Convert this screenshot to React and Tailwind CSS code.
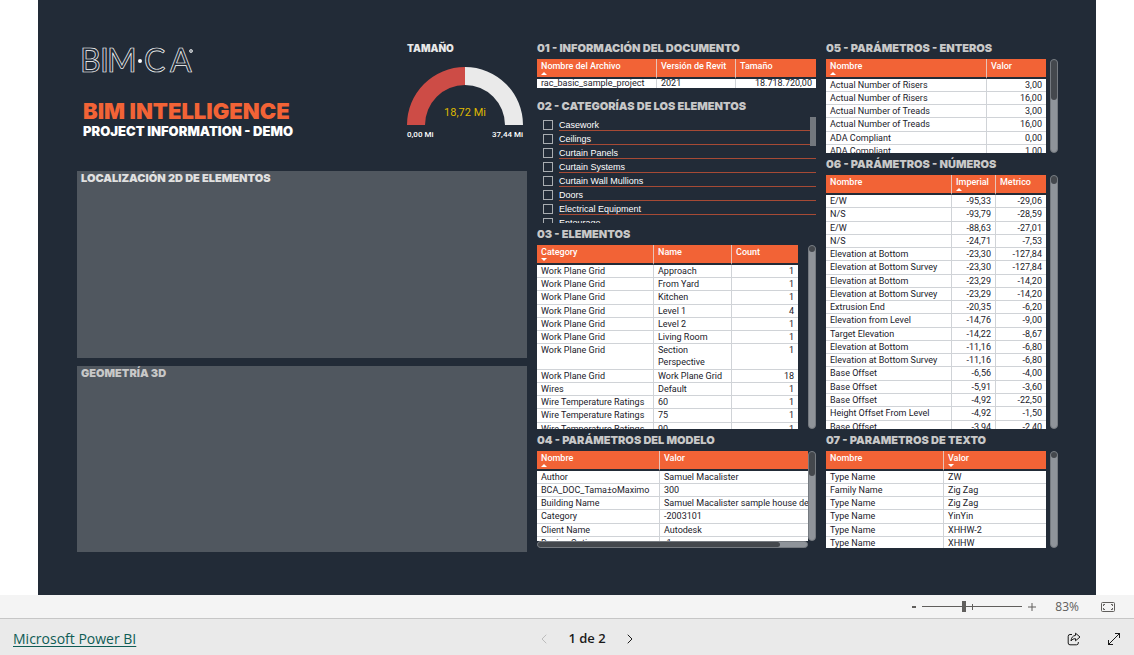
import { useState } from 'react'
import { clsx } from 'clsx'
import { ChevronLeft, ChevronRight } from 'lucide-react'

const CATEGORIES = ['Casework', 'Ceilings', 'Curtain Panels', 'Curtain Systems', 'Curtain Wall Mullions', 'Doors', 'Electrical Equipment', 'Entourage']

const DOCUMENT = {
  cols: [
    { label: 'Nombre del Archivo', width: 'w-[120px]', sort: 'asc' },
    { label: 'Versión de Revit', width: 'w-[79px]' },
    { label: 'Tamaño', num: true },
  ],
  rows: [['rac_basic_sample_project', '2021', '18.718.720,00']],
}

const ELEMENTS = {
  cols: [
    { label: 'Category', width: 'w-[117px]', sort: 'desc' },
    { label: 'Name', width: 'w-[78px]' },
    { label: 'Count', num: true },
  ],
  rows: [
    ['Work Plane Grid', 'Approach', '1'],
    ['Work Plane Grid', 'From Yard', '1'],
    ['Work Plane Grid', 'Kitchen', '1'],
    ['Work Plane Grid', 'Level 1', '4'],
    ['Work Plane Grid', 'Level 2', '1'],
    ['Work Plane Grid', 'Living Room', '1'],
    ['Work Plane Grid', 'Section Perspective', '1'],
    ['Work Plane Grid', 'Work Plane Grid', '18'],
    ['Wires', 'Default', '1'],
    ['Wire Temperature Ratings', '60', '1'],
    ['Wire Temperature Ratings', '75', '1'],
    ['Wire Temperature Ratings', '90', '1'],
  ],
}

const MODEL = {
  cols: [
    { label: 'Nombre', width: 'w-[123px]', sort: 'asc' },
    { label: 'Valor' },
  ],
  rows: [
    ['Author', 'Samuel Macalister'],
    ['BCA_DOC_Tama±oMaximo', '300'],
    ['Building Name', 'Samuel Macalister sample house design'],
    ['Category', '-2003101'],
    ['Client Name', 'Autodesk'],
    ['Design Option', '-1'],
  ],
}

const INTEGERS = {
  cols: [
    { label: 'Nombre', width: 'w-[161px]', sort: 'asc' },
    { label: 'Valor', num: true },
  ],
  rows: [
    ['Actual Number of Risers', '3,00'],
    ['Actual Number of Risers', '16,00'],
    ['Actual Number of Treads', '3,00'],
    ['Actual Number of Treads', '16,00'],
    ['ADA Compliant', '0,00'],
    ['ADA Compliant', '1,00'],
  ],
}

const NUMBERS = {
  cols: [
    { label: 'Nombre', width: 'w-[126px]' },
    { label: 'Imperial', width: 'w-[44px]', num: true, sort: 'asc' },
    { label: 'Metrico', num: true },
  ],
  rows: [
    ['E/W', '-95,33', '-29,06'],
    ['N/S', '-93,79', '-28,59'],
    ['E/W', '-88,63', '-27,01'],
    ['N/S', '-24,71', '-7,53'],
    ['Elevation at Bottom', '-23,30', '-127,84'],
    ['Elevation at Bottom Survey', '-23,30', '-127,84'],
    ['Elevation at Bottom', '-23,29', '-14,20'],
    ['Elevation at Bottom Survey', '-23,29', '-14,20'],
    ['Extrusion End', '-20,35', '-6,20'],
    ['Elevation from Level', '-14,76', '-9,00'],
    ['Target Elevation', '-14,22', '-8,67'],
    ['Elevation at Bottom', '-11,16', '-6,80'],
    ['Elevation at Bottom Survey', '-11,16', '-6,80'],
    ['Base Offset', '-6,56', '-4,00'],
    ['Base Offset', '-5,91', '-3,60'],
    ['Base Offset', '-4,92', '-22,50'],
    ['Height Offset From Level', '-4,92', '-1,50'],
    ['Base Offset', '-3,94', '-2,40'],
  ],
}

const TEXTS = {
  cols: [
    { label: 'Nombre', width: 'w-[118px]' },
    { label: 'Valor', sort: 'desc' },
  ],
  rows: [
    ['Type Name', 'ZW'],
    ['Family Name', 'Zig Zag'],
    ['Type Name', 'Zig Zag'],
    ['Type Name', 'YinYin'],
    ['Type Name', 'XHHW-2'],
    ['Type Name', 'XHHW'],
  ],
}

function Heading({ children }) {
  return <h2 className="h-[22px] leading-[22px] text-[11px] font-black font-['Inter',sans-serif] text-[#c8c8c8] whitespace-nowrap">{children}</h2>
}

function SortArrow({ dir }) {
  return (
    <svg viewBox="0 0 6 3" className="absolute left-1 bottom-0.5 w-1.5 h-[3px] fill-white">
      <path d={dir === 'asc' ? 'M0 3L3 0L6 3Z' : 'M0 0L3 3L6 0Z'} />
    </svg>
  )
}

function DataTable({ data, label, height, nowrap, dense }) {
  return (
    <table aria-label={label} className={clsx("w-full table-fixed border-separate border-spacing-0 bg-white text-[9px] font-['Roboto',sans-serif]", height)}>
      <thead>
        <tr className="bg-[#f26336]">
          {data.cols.map((c, i) => (
            <th key={c.label} className={clsx('relative h-5 px-1 pt-px text-left align-top leading-3 font-medium text-white whitespace-nowrap border-b-2 border-[#222b37]', c.width, i < data.cols.length - 1 && 'border-r border-r-[#e8c3b8]')}>
              {c.label}
              {c.sort && <SortArrow dir={c.sort} />}
            </th>
          ))}
        </tr>
      </thead>
      <tbody>
        {data.rows.map((row, r) => (
          <tr key={r}>
            {row.map((cell, i) => (
              <td key={i} className={clsx('px-1 align-top text-[#1a1a2a] border-b border-[#d0d3d7]', dense ? 'leading-[9px]' : 'leading-3', data.cols[i].num && 'text-right', i < row.length - 1 && 'border-r', nowrap && 'whitespace-nowrap')}>{cell}</td>
            ))}
          </tr>
        ))}
      </tbody>
    </table>
  )
}

function Scrollbar({ thumb }) {
  return (
    <div className="w-2 shrink-0 rounded-full bg-[#8f949a] border border-[#757a80]">
      <div className={clsx('rounded-full bg-[#44484d]', thumb)} />
    </div>
  )
}

function Slicer() {
  const [checked, setChecked] = useState([])

  function toggle(c) {
    setChecked(prev => prev.includes(c) ? prev.filter(x => x !== c) : [...prev, c])
  }

  return (
    <div className="relative h-[106px] overflow-hidden pl-1.5">
      {CATEGORIES.map(c => (
        <label key={c} className="flex items-end gap-1.5 h-3.5">
          <input type="checkbox" checked={checked.includes(c)} onChange={() => toggle(c)} className="appearance-none mb-px w-[10px] h-[10px] border border-[#a9adb1] checked:bg-[#f26336]" />
          <span className="flex-1 border-b border-[#a64a35] text-[9px] leading-[10px] text-white font-['Liberation_Sans',Arial,sans-serif]">{c}</span>
        </label>
      ))}
      <div className="absolute right-0 top-0 w-1.5 h-[29px] bg-[#73787e]" />
    </div>
  )
}

function Logo() {
  return (
    <svg viewBox="0 0 112 28" className="block w-28 h-7 overflow-visible" role="img" aria-label="BIM·CA">
      <g fill="none" stroke="#ffffff" strokeWidth="0.7" fontFamily="Lato, sans-serif" fontSize="32" fontWeight="400">
        <text x="-3 17 24" y="25">BIM</text>
        <text x="61 87" y="25">CA</text>
      </g>
      <circle cx="57" cy="14" r="2" fill="#ffffff" />
      <circle cx="108" cy="4" r="1.500" fill="#8a9098" stroke="#ffffff" strokeWidth="0.7" />
    </svg>
  )
}

function Gauge() {
  return (
    <div className="w-[116px]">
      <h2 className="h-[22px] leading-[22px] text-[10px] font-black font-['Inter',sans-serif] text-[#e8e8e8]">TAMAÑO</h2>
      <div className="relative mt-2">
        <svg viewBox="0 0 116 58" className="block w-full">
          <path d="M0 58A58 58 0 0 1 58 0V18A40 40 0 0 0 18 58Z" fill="#cd4c46" />
          <path d="M58 0A58 58 0 0 1 116 58H98A40 40 0 0 0 58 18Z" fill="#eaeaea" />
        </svg>
        <span className="absolute inset-x-0 bottom-1 text-center text-[11px] leading-4 text-[#dfb900] font-['Roboto',sans-serif]">18,72 Mi</span>
      </div>
      <div className="flex justify-between mt-1 text-[8px] leading-3 font-medium text-white font-['Roboto',sans-serif]">
        <span>0,00 Mi</span>
        <span>37,44 Mi</span>
      </div>
    </div>
  )
}

function Report() {
  return (
    <main className="mx-auto grid w-full max-w-[1058px] flex-1 grid-cols-[450fr_279fr_232fr] gap-x-2.5 bg-[#222b37] pl-[39px] pr-[38px] pt-[37px] pb-[43px]">
      {/* Left: title, gauge and viewers */}
      <section className="flex flex-col gap-2">
        <div className="flex h-[126px] justify-between pl-1.5 pr-1">
          <div className="pt-2.5 font-black font-['Inter',sans-serif] whitespace-nowrap">
            <Logo />
            <h1 className="mt-6 text-[22px] leading-6 text-[#f26336]">BIM INTELLIGENCE</h1>
            <p className="text-[13px] leading-4 text-white">PROJECT INFORMATION - DEMO</p>
          </div>
          <Gauge />
        </div>
        <div className="flex-1 bg-[#50575f] px-1">
          <h2 className="leading-[15px] text-[11px] font-black font-['Inter',sans-serif] text-[#e0e0e0]">LOCALIZACIÓN 2D DE ELEMENTOS</h2>
        </div>
        <div className="flex-1 bg-[#50575f] px-1">
          <h2 className="leading-[15px] text-[11px] font-black font-['Inter',sans-serif] text-[#c8c8c8]">GEOMETRÍA 3D</h2>
        </div>
      </section>

      {/* Middle */}
      <section className="min-w-0">
        <Heading>01 - INFORMACIÓN DEL DOCUMENTO</Heading>
        <div className="h-[29px] mb-[7px] overflow-hidden">
          <DataTable data={DOCUMENT} label="Información del documento" dense />
        </div>
        <Heading>02 - CATEGORÍAS DE LOS ELEMENTOS</Heading>
        <Slicer />
        <Heading>03 - ELEMENTOS</Heading>
        <div className="flex h-[184px] gap-2.5">
          <div className="flex-1 overflow-hidden">
            <DataTable data={ELEMENTS} label="Elementos" height="h-[191px]" />
          </div>
          <Scrollbar thumb="h-1.5" />
        </div>
        <Heading>04 - PARÁMETROS DEL MODELO</Heading>
        <div className="flex">
          <div className="flex-1 min-w-0">
            <div className="h-[90px] overflow-hidden">
              <DataTable data={MODEL} label="Parámetros del modelo" height="h-[99px]" nowrap />
            </div>
            <div className="h-[7px] rounded-full border border-[#757a80] bg-[#8f949a]">
              <div className="h-full w-[90%] rounded-full bg-[#44484d]" />
            </div>
          </div>
          <div className="flex h-[90px]">
            <Scrollbar thumb="h-6" />
          </div>
        </div>
      </section>

      {/* Right */}
      <section className="min-w-0">
        <Heading>05 - PARÁMETROS - ENTEROS</Heading>
        <div className="flex h-[94px] gap-1">
          <div className="flex-1 overflow-hidden">
            <DataTable data={INTEGERS} label="Parámetros enteros" height="h-[99px]" />
          </div>
          <Scrollbar thumb="h-10" />
        </div>
        <Heading>06 - PARÁMETROS - NÚMEROS</Heading>
        <div className="flex h-[254px] gap-1">
          <div className="flex-1 overflow-hidden">
            <DataTable data={NUMBERS} label="Parámetros números" height="h-[259px]" />
          </div>
          <Scrollbar thumb="h-2" />
        </div>
        <Heading>07 - PARAMETROS DE TEXTO</Heading>
        <div className="flex h-[97px] gap-1">
          <div className="flex-1 overflow-hidden">
            <DataTable data={TEXTS} label="Parámetros de texto" height="h-[99px]" />
          </div>
          <Scrollbar thumb="h-1.5" />
        </div>
      </section>
    </main>
  )
}

function ZoomBar() {
  const [zoom, setZoom] = useState(83)

  return (
    <div className="flex h-6 items-center justify-end border-b border-[#c6c6c6] bg-[#f4f4f4] pr-[19px] text-[#605e5c]">
      <button aria-label="Alejar" onClick={() => setZoom(zoom - 1)} className="flex h-4 w-4 items-center justify-center"><span className="h-0.5 w-1 bg-current" /></button>
      <div className="relative flex items-center">
        <span className="absolute left-1/2 h-1.5 w-px bg-[#605e5c]" />
        <input
          type="range" min="0" max="200" value={zoom} aria-label="Zoom"
          onChange={e => setZoom(Number(e.target.value))}
          className="h-3 w-[100px] appearance-none bg-transparent [&::-webkit-slider-runnable-track]:h-px [&::-webkit-slider-runnable-track]:bg-[#605e5c] [&::-webkit-slider-thumb]:-mt-[5px] [&::-webkit-slider-thumb]:h-[11px] [&::-webkit-slider-thumb]:w-1 [&::-webkit-slider-thumb]:appearance-none [&::-webkit-slider-thumb]:bg-[#605e5c]"
        />
      </div>
      <button aria-label="Acercar" onClick={() => setZoom(zoom + 1)} className="ml-1.5 flex h-4 w-2 items-center justify-center">
        <svg viewBox="0 0 8 8" className="h-2 w-2 shrink-0" stroke="currentColor"><path d="M4 0V8M0 4H8" /></svg>
      </button>
      <span className="w-[43px] text-right text-xs">{zoom}%</span>
      <button aria-label="Ajustar a la página" className="ml-[22px]">
        <svg viewBox="0 0 14 10" className="block h-2.5 w-3.5" fill="none" stroke="currentColor">
          <rect x="0.5" y="0.5" width="13" height="9" rx="1" />
          <path d="M2.5 4V2.5H4M10 2.5H11.5V4M11.5 6V7.5H10M4 7.5H2.5V6" />
        </svg>
      </button>
    </div>
  )
}

function Footer() {
  const [page, setPage] = useState(1)

  return (
    <footer className="grid h-9 grid-cols-3 items-center bg-[#eaeaea] px-[13px] pt-[3px] text-[#1a1a1a]">
      <a href="#powerbi" className="text-sm leading-5 text-[#0f5c55] underline underline-offset-2">Microsoft Power BI</a>
      <div className="flex items-center justify-center gap-4 pl-10 text-[13px] font-semibold">
        <button aria-label="Página anterior" disabled={page === 1} onClick={() => setPage(1)} className="disabled:text-[#bdbdbd]"><ChevronLeft className="h-4 w-4" strokeWidth={1.5} /></button>
        <span>{page} de 2</span>
        <button aria-label="Página siguiente" disabled={page === 2} onClick={() => setPage(2)} className="disabled:text-[#bdbdbd]"><ChevronRight className="h-4 w-4" strokeWidth={1.5} /></button>
      </div>
      <div className="flex items-center justify-end gap-[26px]">
        <button aria-label="Compartir">
          <svg viewBox="0 0 14 14" className="block h-3.5 w-3.5" fill="none" stroke="currentColor" strokeLinejoin="round">
            <path d="M5 2.5H3A1.8 1.8 0 0 0 1.2 4.3V11A1.8 1.8 0 0 0 3 12.8H9.5A1.8 1.8 0 0 0 11.3 11V10" />
            <path d="M8.5 1.2L13 5L8.5 8.8V6.7C6.5 6.6 5.2 7.4 4 9C4.2 5.8 5.7 3.7 8.5 3.4Z" />
          </svg>
        </button>
        <button aria-label="Pantalla completa">
          <svg viewBox="0 0 14 14" className="block h-3.5 w-3.5" fill="none" stroke="currentColor">
            <path d="M1 13L13 1M8 1.5H12.5V6M1.5 8V12.5H6" />
          </svg>
        </button>
      </div>
    </footer>
  )
}

export default function App() {
  return (
    <div className="flex min-h-screen flex-col bg-white font-['Open_Sans','Segoe_UI',sans-serif]">
      <Report />
      <ZoomBar />
      <Footer />
    </div>
  )
}
